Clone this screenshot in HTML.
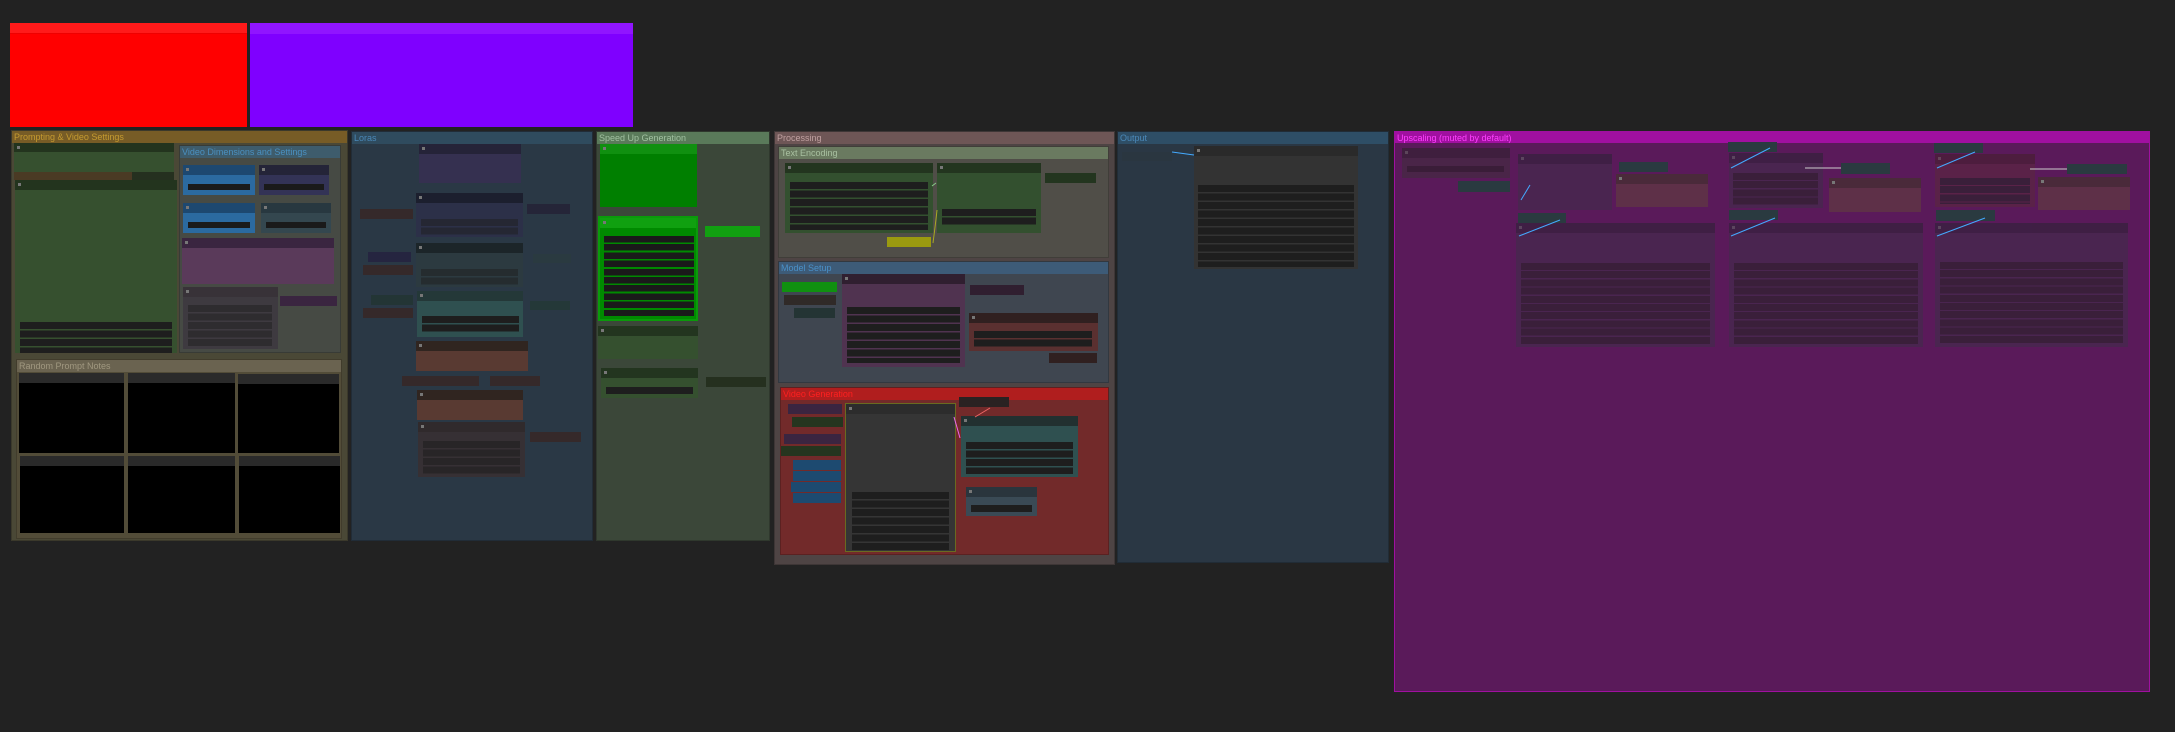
<!DOCTYPE html>
<html><head><meta charset="utf-8"><style>
body{margin:0;width:2175px;height:732px;background:#222;overflow:hidden;position:relative;font-family:"Liberation Sans",sans-serif}
div{position:absolute;box-sizing:border-box}
.g{border:1px solid rgba(0,0,0,.2)}
.gh{left:0;top:0;right:0;height:12px;font-size:9px;line-height:12px;padding-left:2px;white-space:nowrap;overflow:hidden}
.n .h{left:0;top:0;right:0;height:10px;background:rgba(0,0,0,.35)}
.n .h::before{content:"";position:absolute;left:3px;top:3px;width:3px;height:3px;background:#777}
.rows{background:repeating-linear-gradient(#1e1e1e 0 7px,transparent 7px 8.5px)}
.blk{background:#000}
</style></head><body>

<!-- top color boxes -->
<div style="left:10px;top:23px;width:237px;height:104px;background:#ff0000"><div style="left:0;top:0;right:0;height:11px;background:#ff1a1a;border-bottom:1px solid #e00"></div></div>
<div style="left:250px;top:23px;width:383px;height:104px;background:#7f00ff"><div style="left:0;top:0;right:0;height:11px;background:#9015ff"></div></div>

<!-- Prompting group -->
<div class="g" style="left:11px;top:130px;width:337px;height:411px;background:#4a4836">
 <div class="gh" style="background:#775c26;color:#c49a30">Prompting &amp; Video Settings</div>
</div>
<div class="n" style="left:14px;top:143px;width:160px;height:29px;background:#36502f"><div class="h" style="height:9px"></div></div>
<div style="left:14px;top:172px;width:118px;height:8px;background:#4a3a24"></div>
<div style="left:132px;top:172px;width:42px;height:8px;background:#25301f"></div>
<div class="n" style="left:15px;top:180px;width:162px;height:173px;background:#36502f"><div class="h"></div></div>
<div class="rows" style="left:20px;top:322px;width:152px;height:31px"></div>
<div class="g" style="left:179px;top:145px;width:162px;height:208px;background:#464a44">
 <div class="gh" style="background:#3e5c6c;color:#4a90c0">Video Dimensions and Settings</div>
</div>
<div class="n" style="left:183px;top:165px;width:72px;height:30px;background:#2b6aa0"><div class="h" style="background:#1d4870"></div><div style="left:5px;top:19px;width:62px;height:6px;background:#1a1a1a"></div></div>
<div class="n" style="left:259px;top:165px;width:70px;height:30px;background:#333356"><div class="h" style="background:#242438"></div><div style="left:5px;top:19px;width:60px;height:6px;background:#1a1a1a"></div></div>
<div class="n" style="left:183px;top:203px;width:72px;height:30px;background:#2b6aa0"><div class="h" style="background:#1d4870"></div><div style="left:5px;top:19px;width:62px;height:6px;background:#1a1a1a"></div></div>
<div class="n" style="left:261px;top:203px;width:70px;height:30px;background:#34474f"><div class="h" style="background:#283840"></div><div style="left:5px;top:19px;width:60px;height:6px;background:#1a1a1a"></div></div>
<div class="n" style="left:182px;top:238px;width:152px;height:46px;background:#5a3a5a"><div class="h" style="background:#3a2540"></div></div>
<div class="n" style="left:183px;top:287px;width:95px;height:62px;background:#3e3a40"><div class="h" style="background:#383238"></div><div class="rows" style="left:5px;top:18px;width:84px;height:42px;opacity:.5"></div></div>
<div style="left:280px;top:296px;width:57px;height:10px;background:#3a2540"></div>
<div class="g" style="left:16px;top:359px;width:326px;height:180px;background:#524c38">
 <div class="gh" style="background:#6a6350;color:#a09880">Random Prompt Notes</div>
</div>
<div class="blk" style="left:19px;top:373px;width:105px;height:80px;border-top:10px solid #2a2a2a"></div>
<div class="blk" style="left:128px;top:373px;width:107px;height:80px;border-top:10px solid #2a2a2a"></div>
<div class="blk" style="left:238px;top:374px;width:101px;height:79px;border-top:10px solid #2a2a2a"></div>
<div class="blk" style="left:20px;top:456px;width:104px;height:77px;border-top:10px solid #2a2a2a"></div>
<div class="blk" style="left:128px;top:456px;width:107px;height:77px;border-top:10px solid #2a2a2a"></div>
<div class="blk" style="left:239px;top:456px;width:101px;height:77px;border-top:10px solid #2a2a2a"></div>

<!-- Loras -->
<div class="g" style="left:351px;top:131px;width:242px;height:410px;background:#2a3845">
 <div class="gh" style="background:#2f4b5e;color:#4a88b8">Loras</div>
</div>
<div class="n" style="left:419px;top:144px;width:102px;height:39px;background:#353050"><div class="h" style="background:#252338"></div></div>
<div class="n" style="left:416px;top:193px;width:107px;height:44px;background:#2c3048"><div class="h"></div><div class="rows" style="left:5px;top:26px;width:97px;height:16px;opacity:.5"></div></div>
<div class="n" style="left:416px;top:243px;width:107px;height:44px;background:#2c3a40"><div class="h"></div><div class="rows" style="left:5px;top:26px;width:97px;height:16px;opacity:.5"></div></div>
<div class="n" style="left:417px;top:291px;width:106px;height:46px;background:#2f5050"><div class="h" style="background:#243838"></div><div class="rows" style="left:5px;top:25px;width:97px;height:16px"></div></div>
<div class="n" style="left:416px;top:341px;width:112px;height:30px;background:#593a32"><div class="h" style="background:#302520"></div></div>
<div class="n" style="left:417px;top:390px;width:106px;height:30px;background:#593a32"><div class="h" style="background:#302520"></div></div>
<div class="n" style="left:418px;top:422px;width:107px;height:55px;background:#363034"><div class="h" style="background:#302a2c"></div><div class="rows" style="left:5px;top:19px;width:97px;height:34px;opacity:.6"></div></div>
<div style="left:360px;top:209px;width:53px;height:10px;background:#35292a"></div>
<div style="left:368px;top:252px;width:43px;height:10px;background:#252540"></div>
<div style="left:363px;top:265px;width:50px;height:10px;background:#35292a"></div>
<div style="left:371px;top:295px;width:42px;height:10px;background:#233535"></div>
<div style="left:363px;top:308px;width:50px;height:10px;background:#35292a"></div>
<div style="left:527px;top:204px;width:43px;height:10px;background:#252538"></div>
<div style="left:533px;top:254px;width:38px;height:9px;background:#2a3a40"></div>
<div style="left:530px;top:301px;width:40px;height:9px;background:#243838"></div>
<div style="left:402px;top:376px;width:77px;height:10px;background:#35292a"></div>
<div style="left:490px;top:376px;width:50px;height:10px;background:#35292a"></div>
<div style="left:530px;top:432px;width:51px;height:10px;background:#35292a"></div>

<!-- Speed up -->
<div class="g" style="left:596px;top:131px;width:174px;height:410px;background:#3b4739">
 <div class="gh" style="background:#5a7a5a;color:#a0c0a0">Speed Up Generation</div>
</div>
<div class="n" style="left:600px;top:144px;width:97px;height:63px;background:#007f00"><div class="h" style="background:#109010"></div></div>
<div class="n" style="left:598px;top:216px;width:100px;height:105px;background:#008a00;border:2px solid #0a9a0a"><div class="h" style="background:#10a010"></div><div class="rows" style="left:4px;top:18px;width:90px;height:80px;background:repeating-linear-gradient(#1a1a1a 0 6.5px,transparent 6.5px 8.2px)"></div></div>
<div style="left:705px;top:226px;width:55px;height:11px;background:#11a011"></div>
<div class="n" style="left:598px;top:326px;width:100px;height:33px;background:#35502f"><div class="h" style="background:#23351f"></div></div>
<div class="n" style="left:601px;top:368px;width:97px;height:30px;background:#35502f"><div class="h" style="background:#23351f"></div><div style="left:5px;top:19px;width:87px;height:7px;background:#1e1e1e"></div></div>
<div style="left:706px;top:377px;width:60px;height:10px;background:#25301f"></div>

<!-- Processing -->
<div class="g" style="left:774px;top:131px;width:341px;height:434px;background:#4e4444">
 <div class="gh" style="background:#6e5656;color:#c0a0a0">Processing</div>
</div>
<div class="g" style="left:778px;top:146px;width:331px;height:112px;background:#504e48">
 <div class="gh" style="background:#6a7a60;color:#a8c0a0">Text Encoding</div>
</div>
<div class="n" style="left:785px;top:163px;width:148px;height:70px;background:#33502f"><div class="h" style="background:#23351f"></div><div class="rows" style="left:5px;top:19px;width:138px;height:48px"></div></div>
<div class="n" style="left:937px;top:163px;width:104px;height:70px;background:#33502f"><div class="h" style="background:#23351f"></div><div class="rows" style="left:5px;top:46px;width:94px;height:16px"></div></div>
<div style="left:1045px;top:173px;width:51px;height:10px;background:#23351f"></div>
<div style="left:887px;top:237px;width:44px;height:10px;background:#9a9a10"></div>
<div class="g" style="left:778px;top:261px;width:331px;height:122px;background:#3f4650">
 <div class="gh" style="background:#3d5b78;color:#4a90c8">Model Setup</div>
</div>
<div class="n" style="left:842px;top:274px;width:123px;height:93px;background:#503350"><div class="h" style="background:#301f30"></div><div class="rows" style="left:5px;top:33px;width:113px;height:56px"></div></div>
<div style="left:782px;top:282px;width:55px;height:10px;background:#109010"></div>
<div style="left:784px;top:295px;width:52px;height:10px;background:#302a28"></div>
<div style="left:794px;top:308px;width:41px;height:10px;background:#243434"></div>
<div style="left:970px;top:285px;width:54px;height:10px;background:#301f30"></div>
<div class="n" style="left:969px;top:313px;width:129px;height:38px;background:#5a3030"><div class="h" style="background:#302020"></div><div class="rows" style="left:5px;top:18px;width:118px;height:16px"></div></div>
<div style="left:1049px;top:353px;width:48px;height:10px;background:#302020"></div>
<div class="g" style="left:780px;top:387px;width:329px;height:168px;background:#722a2a">
 <div class="gh" style="background:#b01e1e;color:#ff2020">Video Generation</div>
</div>
<div class="n" style="left:845px;top:403px;width:111px;height:149px;background:#353535;border:1px solid #6a6a20"><div class="h" style="background:#2c2c2c"></div><div class="rows" style="left:6px;top:88px;width:97px;height:58px"></div></div>
<div class="n" style="left:961px;top:416px;width:117px;height:61px;background:#2f5050"><div class="h" style="background:#223030"></div><div class="rows" style="left:5px;top:26px;width:107px;height:32px"></div></div>
<div class="n" style="left:966px;top:487px;width:71px;height:29px;background:#3a4a55"><div class="h" style="background:#2a353d"></div><div style="left:5px;top:18px;width:61px;height:7px;background:#1e1e1e"></div></div>
<div style="left:959px;top:397px;width:50px;height:10px;background:#2a2222"></div>
<div style="left:788px;top:404px;width:54px;height:10px;background:#3a2540"></div>
<div style="left:792px;top:417px;width:51px;height:10px;background:#25351f"></div>
<div style="left:784px;top:434px;width:57px;height:10px;background:#3a2540"></div>
<div style="left:781px;top:446px;width:60px;height:10px;background:#25351f"></div>
<div style="left:793px;top:460px;width:48px;height:10px;background:#1d4a70"></div>
<div style="left:793px;top:471px;width:48px;height:10px;background:#1d4a70"></div>
<div style="left:791px;top:482px;width:50px;height:10px;background:#1d4a70"></div>
<div style="left:793px;top:493px;width:48px;height:10px;background:#1d4a70"></div>

<!-- Output -->
<div class="g" style="left:1117px;top:131px;width:272px;height:432px;background:#2a3744">
 <div class="gh" style="background:#2e4e66;color:#4a88b8">Output</div>
</div>
<div class="n" style="left:1194px;top:146px;width:164px;height:123px;background:#333"><div class="h" style="background:#2a2a2a"></div><div class="rows" style="left:4px;top:39px;width:156px;height:82px"></div></div>
<div style="left:1122px;top:152px;width:50px;height:9px;background:#2a3640"></div>

<!-- Upscaling -->
<div class="g" style="left:1394px;top:131px;width:756px;height:561px;background:#5a1a5a;border-color:#a010a0">
 <div class="gh" style="background:#a010a0;color:#ff40ff;height:11px">Upscaling (muted by default)</div>
</div>
<div class="n" style="left:1402px;top:148px;width:108px;height:30px;background:#4a2548"><div class="h" style="opacity:.4"></div><div style="left:5px;top:18px;width:97px;height:6px;background:#3a1d38"></div></div>
<div style="left:1458px;top:181px;width:52px;height:11px;background:#2a3a40"></div>
<div class="n" style="left:1518px;top:154px;width:94px;height:56px;background:#4a2550"><div class="h" style="opacity:.4"></div></div>
<div style="left:1619px;top:162px;width:49px;height:10px;background:#2a3a40"></div>
<div class="n" style="left:1616px;top:174px;width:92px;height:33px;background:#5e3048"><div class="h" style="background:#4a2a3a"></div></div>
<div style="left:1518px;top:213px;width:48px;height:10px;background:#2a3a40"></div>
<div class="n" style="left:1516px;top:223px;width:199px;height:124px;background:#4a2550"><div class="h" style="opacity:.4"></div><div class="rows" style="left:5px;top:40px;width:189px;height:81px;background:repeating-linear-gradient(#3a1f3a 0 7px,transparent 7px 8.2px)"></div></div>

<div style="left:1728px;top:142px;width:49px;height:10px;background:#2a3a40"></div>
<div class="n" style="left:1729px;top:153px;width:94px;height:55px;background:#4a2550"><div class="h" style="opacity:.4"></div><div class="rows" style="left:4px;top:20px;width:85px;height:33px;background:repeating-linear-gradient(#3a1f3a 0 7px,transparent 7px 8.2px)"></div></div>
<div style="left:1841px;top:163px;width:49px;height:11px;background:#2a3a40"></div>
<div class="n" style="left:1829px;top:178px;width:92px;height:34px;background:#5e3048"><div class="h" style="background:#4a2a3a"></div></div>
<div style="left:1729px;top:210px;width:49px;height:10px;background:#2a3a40"></div>
<div class="n" style="left:1729px;top:223px;width:194px;height:124px;background:#4a2550"><div class="h" style="opacity:.4"></div><div class="rows" style="left:5px;top:40px;width:184px;height:81px;background:repeating-linear-gradient(#3a1f3a 0 7px,transparent 7px 8.2px)"></div></div>

<div style="left:1934px;top:143px;width:49px;height:10px;background:#2a3a40"></div>
<div class="n" style="left:1935px;top:154px;width:100px;height:53px;background:#5a2248"><div class="h" style="opacity:.4"></div><div class="rows" style="left:5px;top:24px;width:90px;height:26px;background:repeating-linear-gradient(#3a1f3a 0 7px,transparent 7px 8.2px)"></div></div>
<div style="left:2067px;top:164px;width:60px;height:10px;background:#2a3a40"></div>
<div class="n" style="left:2038px;top:177px;width:92px;height:33px;background:#5e3048"><div class="h" style="background:#4a2a3a"></div></div>
<div style="left:1936px;top:210px;width:59px;height:11px;background:#2a3a40"></div>
<div class="n" style="left:1935px;top:223px;width:193px;height:124px;background:#4a2550"><div class="h" style="opacity:.4"></div><div class="rows" style="left:5px;top:39px;width:183px;height:82px;background:repeating-linear-gradient(#3a1f3a 0 7px,transparent 7px 8.2px)"></div></div>

<svg style="position:absolute;left:0;top:0" width="2175" height="732">
 <g fill="none" stroke-width="1">
  <path d="M932 186 L936 183" stroke="#8c8"/>
  <path d="M933 243 Q936 220 937 210" stroke="#aa2"/>
  <path d="M1172 152 L1194 155" stroke="#4af"/>
  <path d="M1521 200 L1530 185" stroke="#4af"/>
  <path d="M1731 168 L1770 148" stroke="#4af"/>
  <path d="M1937 168 L1975 152" stroke="#4af"/>
  <path d="M1519 236 L1560 220" stroke="#4af"/>
  <path d="M1731 236 L1775 218" stroke="#4af"/>
  <path d="M1937 236 L1985 218" stroke="#4af"/>
  <path d="M1805 168 L1841 168" stroke="#ccc"/>
  <path d="M2030 169 L2067 169" stroke="#ccc"/>
  <path d="M990 408 L975 417" stroke="#e66"/>
  <path d="M954 417 L960 438" stroke="#e6e"/>
 </g>
</svg>
</body></html>
